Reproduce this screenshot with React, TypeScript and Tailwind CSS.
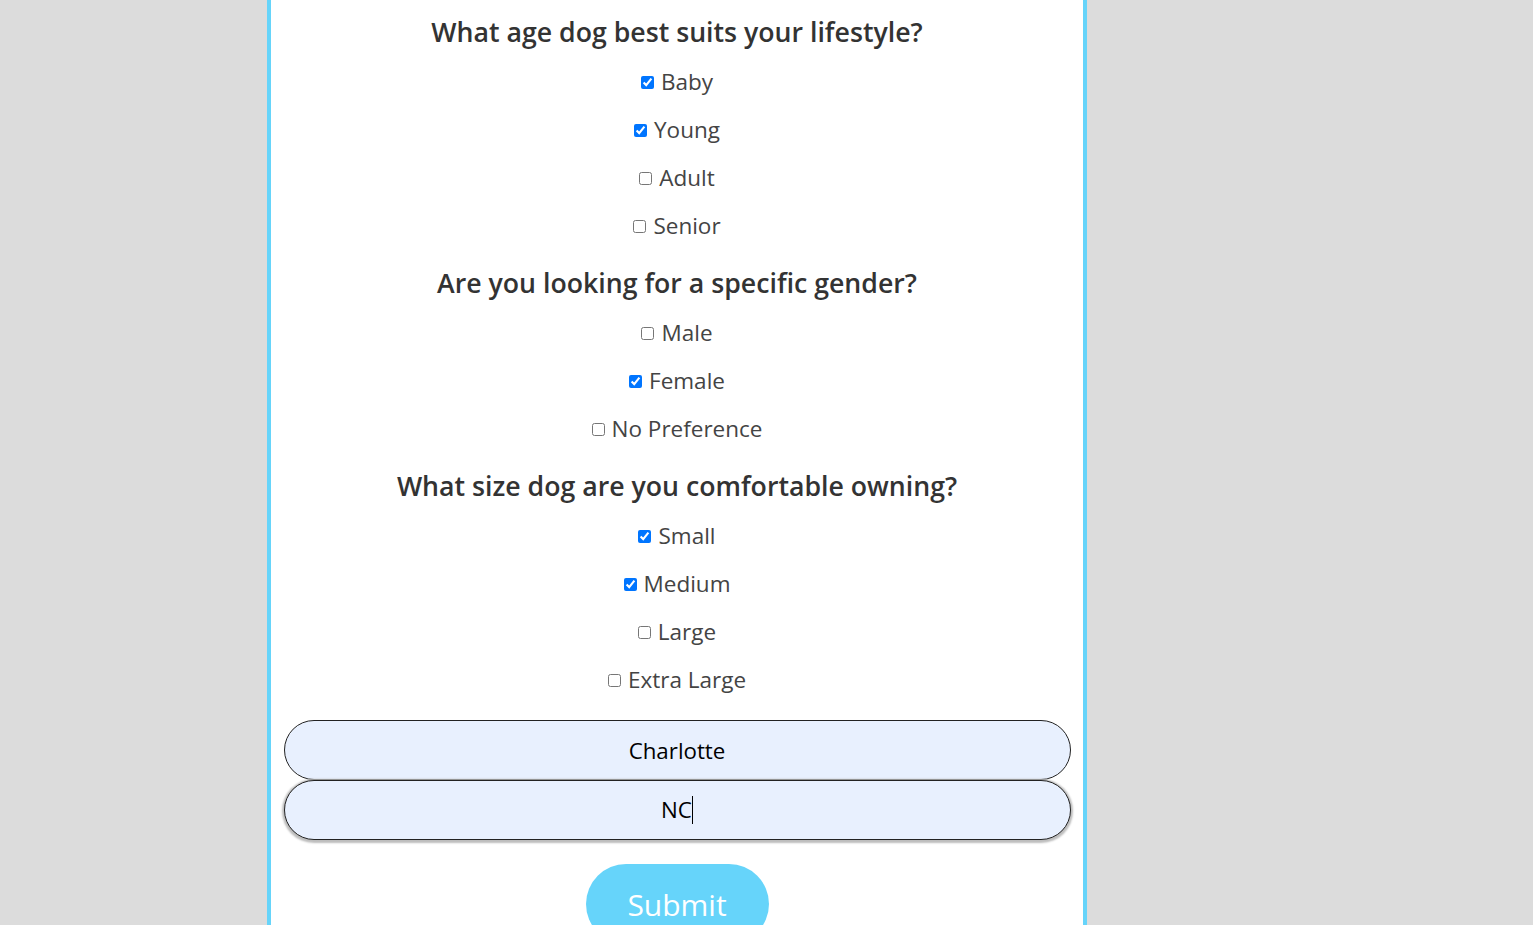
import React from "react";

type Option = { label: string; checked: boolean };

const sections: { title: string; options: Option[] }[] = [
  {
    title: "What age dog best suits your lifestyle?",
    options: [
      { label: "Baby", checked: true },
      { label: "Young", checked: true },
      { label: "Adult", checked: false },
      { label: "Senior", checked: false },
    ],
  },
  {
    title: "Are you looking for a specific gender?",
    options: [
      { label: "Male", checked: false },
      { label: "Female", checked: true },
      { label: "No Preference", checked: false },
    ],
  },
  {
    title: "What size dog are you comfortable owning?",
    options: [
      { label: "Small", checked: true },
      { label: "Medium", checked: true },
      { label: "Large", checked: false },
      { label: "Extra Large", checked: false },
    ],
  },
];

const App = () => {
  return (
    <div
      className="min-h-screen h-[925px] overflow-hidden bg-[#dcdcdc] flex pl-[267px]"
      style={{ fontFamily: '"Open Sans", "Noto Sans", sans-serif' }}
    >
      <div className="w-[820px] shrink-0 bg-white border-x-4 border-[#66d4fa] flex flex-col items-center pt-[14px]">
        {sections.map((section, i) => (
          <div key={section.title} className={`flex flex-col items-center w-full ${i > 0 ? "mt-[15px]" : ""}`}>
            <h2 className="h-[36px] leading-[36px] text-[26.7px] font-semibold text-[#333]">
              {section.title}
            </h2>
            <div className="mt-[8px] flex flex-col items-center">
              {section.options.map((opt) => (
                <label key={opt.label} className="h-[48px] flex items-center text-[22.5px] text-[#444]">
                  <input
                    type="checkbox"
                    defaultChecked={opt.checked}
                    className="w-[13px] h-[13px] mr-[7px] accent-[#0075ff]"
                  />
                  {opt.label}
                </label>
              ))}
            </div>
          </div>
        ))}

        {/* City / state */}
        <div className="mt-[16px] w-[787px] flex flex-col">
          <input
            type="text"
            defaultValue="Charlotte"
            className="h-[60px] w-full rounded-full border border-[#222] bg-[#e8f0fe] text-center text-[22.3px] text-black outline-none"
          />
          <div className="h-[60px] w-full rounded-full border border-[#222] bg-[#e8f0fe] flex items-center justify-center text-[22.3px] text-black shadow-[0_1px_2px_2px_#bdbdbd]">
            <span>NC</span>
            <span className="inline-block w-px h-[28px] bg-black" />
          </div>
        </div>

        <button className="mt-[24px] w-[183px] h-[80px] rounded-full bg-[#66d4fa] text-white text-[30px] shrink-0">
          Submit
        </button>
      </div>
    </div>
  );
};

export default App;
